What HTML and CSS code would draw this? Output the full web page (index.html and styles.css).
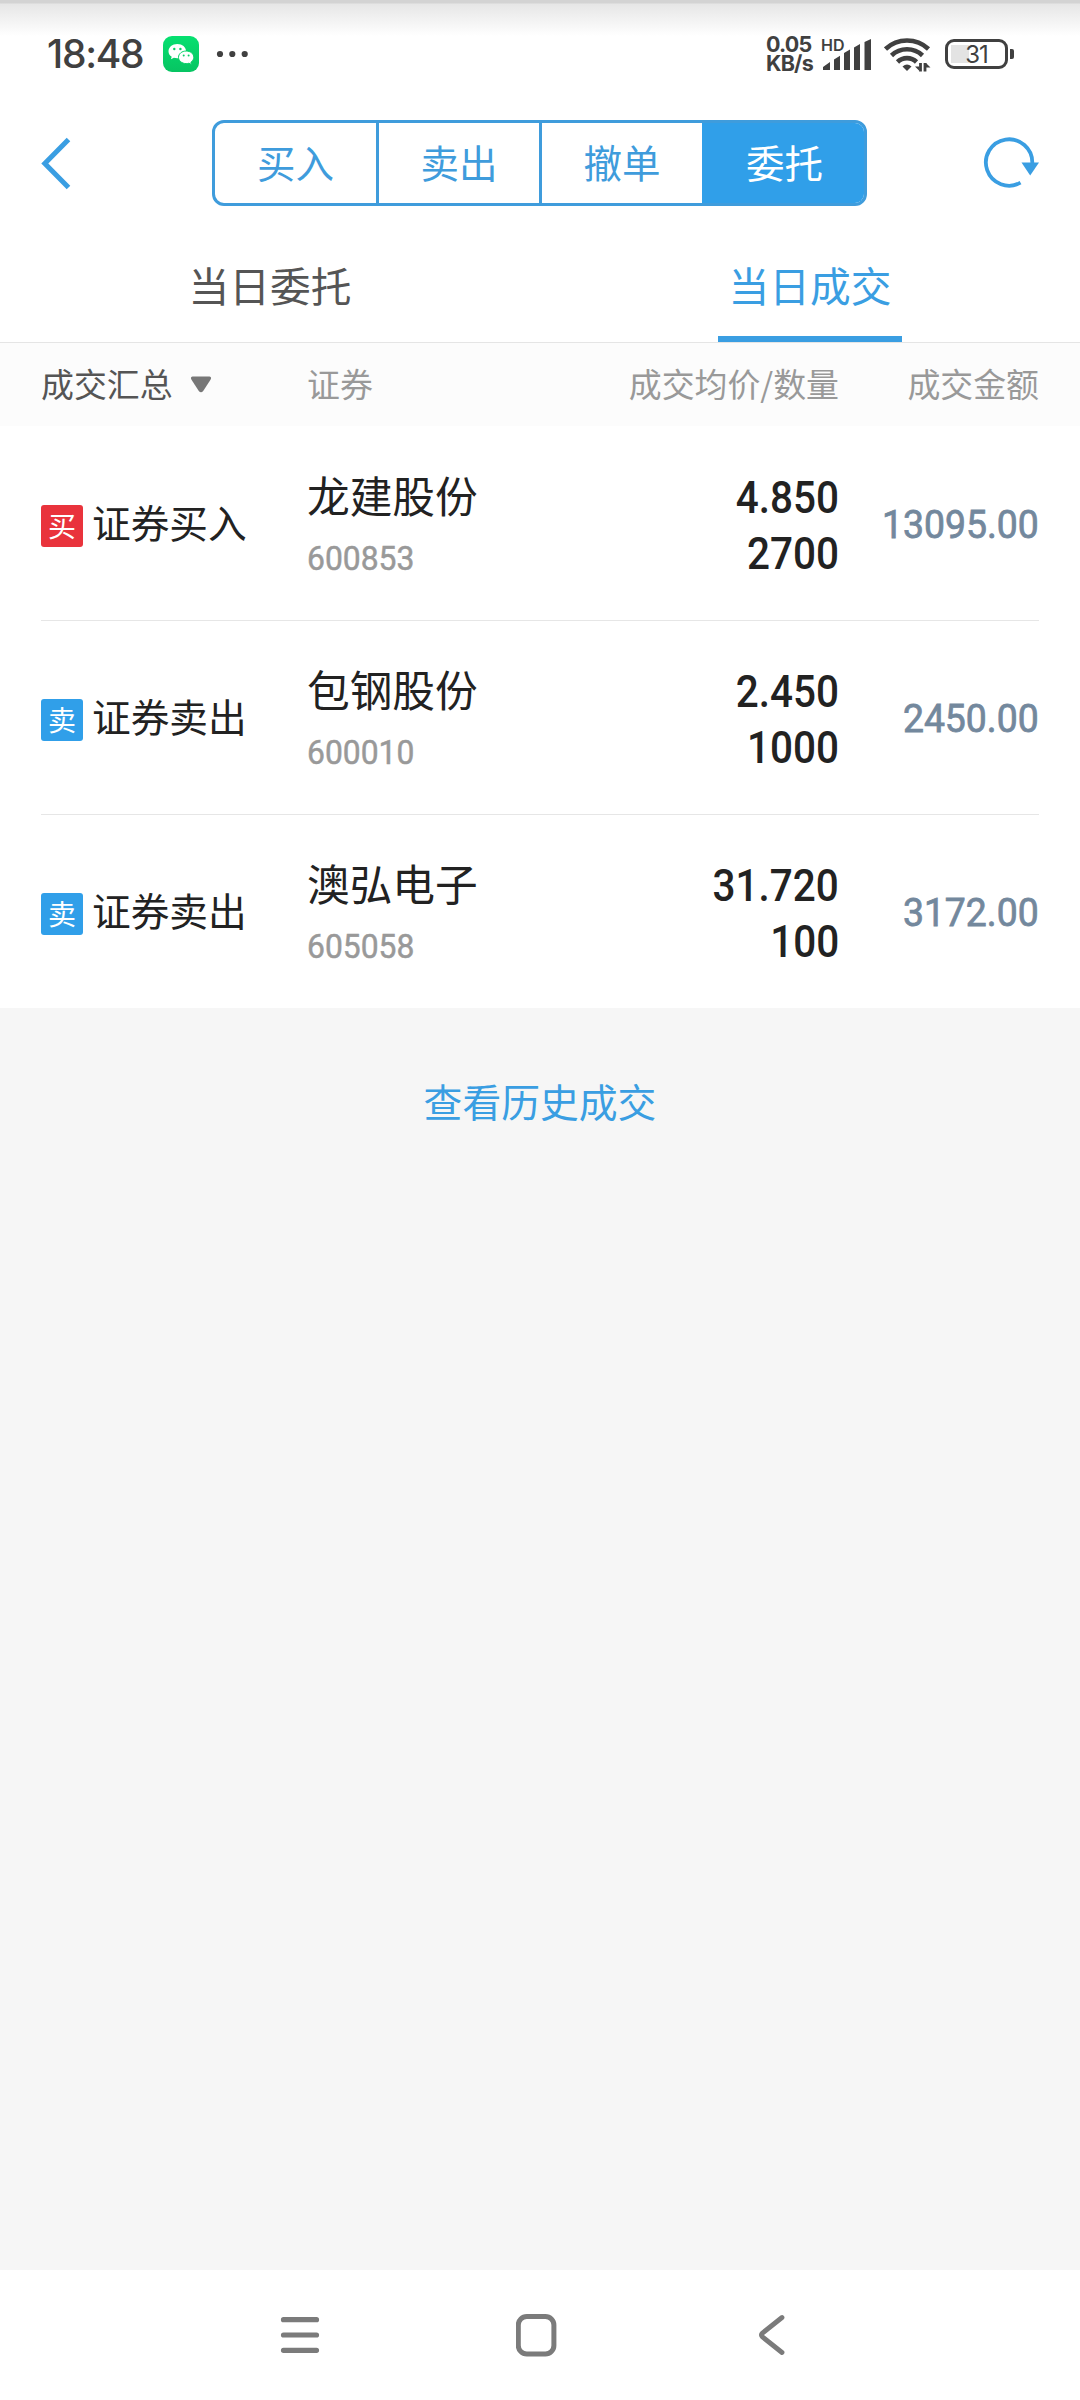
FILE: index.html
```html
<!DOCTYPE html>
<html lang="zh-CN">
<head>
<meta charset="utf-8">
<title>当日成交</title>
<link rel="stylesheet" href="styles.css">
</head>
<body>
<div class="screen">
  <div class="statusbar">
    <div class="status-left">
      <span class="clock">18:48</span>
      <svg class="wechat" width="36" height="36" viewBox="0 0 36 36">
        <defs><linearGradient id="wg" x1="0" y1="0" x2="0" y2="1"><stop offset="0" stop-color="#06e070"/><stop offset="1" stop-color="#07c462"/></linearGradient></defs>
        <rect width="36" height="36" rx="9" fill="url(#wg)"/>
        <path d="M14.300 8c-5 0-8.800 3.200-8.800 7.200 0 2.300 1.200 4.300 3.200 5.600l-.8 2.500 3-1.500c1 .3 2 .5 3.400.5 5 0 8.800-3.100 8.800-7.100S19.300 8 14.300 8z" fill="#fff"/>
        <path d="M23.200 15c-4.300 0-7.700 2.800-7.700 6.300s3.400 6.300 7.700 6.300c1 0 1.900-.1 2.800-.4l2.500 1.400-.6-2.300c1.800-1.200 2.900-3 2.900-5 0-3.500-3.400-6.300-7.600-6.300z" fill="#fff" stroke="#07d068" stroke-width="1"/>
        <g fill="#07d068"><circle cx="11.300" cy="13" r="1.200"/><circle cx="17.400" cy="13" r="1.200"/><circle cx="20.700" cy="19.400" r="1"/><circle cx="25.600" cy="19.400" r="1"/></g>
      </svg>
      <svg class="dots" width="32" height="8" viewBox="0 0 32 8" fill="#404040"><circle cx="4" cy="4" r="3.100"/><circle cx="16.300" cy="4" r="3.100"/><circle cx="28.700" cy="4" r="3.100"/></svg>
    </div>
    <div class="status-right">
      <div class="speed"><span class="speed-value">0.05</span><span class="speed-unit">KB/s</span></div>
      <div class="signal">
        <span class="hd">HD</span>
        <svg width="48" height="32" viewBox="0 0 48 32" fill="#404040">
          <path d="M0 31v-3l7-5v8zM11 31V20.500l6-3.800V31zM21 31V14l6-3.500V31zM31 31V8.500L37 5v26zM41.500 31V3L48 0v31z"/>
        </svg>
      </div>
      <svg class="wifi" width="48" height="36" viewBox="0 0 48 36">
        <g fill="none" stroke="#404040" stroke-width="4.600">
          <path d="M1.500 13a31.500 31.500 0 0 1 43 0"/>
          <path d="M7.500 19.500a22.500 22.500 0 0 1 31 0"/>
          <path d="M13.500 26a13.500 13.500 0 0 1 19 0"/>
        </g>
        <path d="M18.500 30.500q4.500-4 9 0L23 35z" fill="#404040"/>
        <path d="M36.500 27v8.500M41 35.500V27" stroke="#404040" stroke-width="2.800" fill="none"/>
        <path d="M31 30.500h4.500v4.500zM46.500 31.500H42V27z" fill="#404040"/>
      </svg>
      <div class="battery"><span>31</span></div>
    </div>
  </div>

  <div class="titlebar">
    <svg class="back" width="34" height="56" viewBox="0 0 34 56"><path d="M29.500 4.500 5.800 28.500 29.500 52.500" fill="none" stroke="#3a9ee2" stroke-width="5"/></svg>
    <div class="segments">
      <span class="segment">买入</span><span class="segment">卖出</span><span class="segment">撤单</span><span class="segment active">委托</span>
    </div>
    <svg class="refresh" width="58" height="56" viewBox="0 0 58 56"><path d="M49.300 29A23.200 23.200 0 1 0 37.500 48.700" fill="none" stroke="#3a9ee2" stroke-width="3.800"/><path d="M38.500 28.500h17.500l-8.800 13z" fill="#3a9ee2"/></svg>
  </div>

  <div class="tabs">
    <div class="tab"><span>当日委托</span></div>
    <div class="tab current"><span>当日成交</span></div>
  </div>

  <div class="table-head">
    <div class="filter">成交汇总<svg width="22" height="17" viewBox="0 0 22 17"><path d="M2.500.5h17q2.500.5 1 3.200l-7.300 11.300q-2.200 2.500-4.400 0L1.500 3.700Q0 1 2.500.5z" fill="#777"/></svg></div>
    <div>证券</div>
    <div class="right">成交均价/数量</div>
    <div class="right">成交金额</div>
  </div>

  <div class="rows">
    <div class="row">
      <div class="side"><span class="badge buy">买</span><span>证券买入</span></div>
      <div class="stock"><span class="name">龙建股份</span><span class="code">600853</span></div>
      <div class="deal"><span>4.850</span><span>2700</span></div>
      <div class="amount"><span>13095.00</span></div>
    </div>
    <div class="row">
      <div class="side"><span class="badge sell">卖</span><span>证券卖出</span></div>
      <div class="stock"><span class="name">包钢股份</span><span class="code">600010</span></div>
      <div class="deal"><span>2.450</span><span>1000</span></div>
      <div class="amount"><span>2450.00</span></div>
    </div>
    <div class="row">
      <div class="side"><span class="badge sell">卖</span><span>证券卖出</span></div>
      <div class="stock"><span class="name">澳弘电子</span><span class="code">605058</span></div>
      <div class="deal"><span>31.720</span><span>100</span></div>
      <div class="amount"><span>3172.00</span></div>
    </div>
  </div>

  <div class="history"><span>查看历史成交</span></div>

  <div class="navbar">
    <svg width="40" height="44" viewBox="0 0 40 44"><path d="M3.500 6.700h33M3.500 22h33M3.500 37.300h33" stroke="#7b7b7b" stroke-width="5.200" stroke-linecap="round"/></svg>
    <svg width="44" height="44" viewBox="0 0 44 44"><rect x="2.300" y="3.500" width="35.600" height="37.500" rx="8.500" fill="none" stroke="#7b7b7b" stroke-width="5"/></svg>
    <svg width="32" height="44" viewBox="0 0 32 44"><path d="M26 4.500 6.500 20q-2 2 0 4L26 39.500" fill="none" stroke="#7b7b7b" stroke-width="4.800" stroke-linecap="round"/></svg>
  </div>
</div>
</body>
</html>
```
FILE: styles.css
```css
* { box-sizing: border-box; }
body {
  margin: 0;
  background: #f6f6f6;
  font-family: "Noto Sans CJK SC", sans-serif;
  color: #222;
}
.screen {
  width: 1080px;
  height: 2400px;
  display: flex;
  flex-direction: column;
  overflow: hidden;
}
svg { display: block; flex: none; }

.statusbar {
  height: 108px;
  padding: 0 72px 0 47px;
  display: flex;
  justify-content: space-between;
  align-items: center;
  background: linear-gradient(#d3d3d3 0, #d3d3d3 3px, #e6e6e6 4px, #fff 36px);
  color: #404040;
  font-family: Inter, sans-serif;
}
.status-left, .status-right { display: flex; align-items: center; }
.clock { font-size: 39px; font-weight: 500; width: 116px; line-height: 40px; letter-spacing: -1.300px; }
.dots { margin-left: 17px; }
.speed {
  width: 57px;
  display: flex;
  flex-direction: column;
  font-size: 21.500px;
  font-weight: 700;
  line-height: 19px;
  letter-spacing: -.8px;
}
.signal { width: 61px; height: 36px; position: relative; display: flex; align-items: flex-end; padding-bottom: 1px; }
.hd { position: absolute; left: -2px; top: 1px; font-size: 16px; font-weight: 600; line-height: 16px; }
.battery {
  position: relative;
  margin-left: 13px;
  width: 63px;
  height: 30px;
  border: 3px solid #404040;
  border-radius: 9px;
  background: linear-gradient(90deg, #e3e3e3 18px, transparent 18px) 3px 3px / 50px 18px no-repeat;
  font-size: 24px;
  line-height: 25px;
  text-align: center;
  letter-spacing: -1px;
}
.battery::after {
  content: "";
  position: absolute;
  right: -9px;
  top: 7px;
  width: 4px;
  height: 10px;
  border-radius: 0 2px 2px 0;
  background: #404040;
}

.titlebar {
  height: 126px;
  padding: 12px 39px 0;
  display: flex;
  justify-content: space-between;
  align-items: flex-start;
  background: #fff;
}
.back { margin-top: 15px; }
.refresh { margin-top: 14px; }
.segments {
  width: 655px;
  height: 86px;
  margin-left: 23px;
  display: grid;
  grid-template-columns: 161px 163px 163px 162px;
  border: 3px solid #3f9cdc;
  border-radius: 12px;
  overflow: hidden;
}
.segment {
  font-size: 38.500px;
  line-height: 76px;
  text-align: center;
  color: #3f9cdc;
  border-left: 3px solid #3f9cdc;
}
.segment:first-child { border-left: 0; }
.segment.active { background: #309fe9; color: #fff; border-color: #309fe9; }

.tabs {
  height: 109px;
  display: grid;
  grid-template-columns: 1fr 1fr;
  background: #fff;
  border-bottom: 1px solid #e5e5e5;
}
.tab {
  display: flex;
  justify-content: center;
  font-size: 40.700px;
  line-height: 101px;
  color: #555;
}
.tab.current span {
  width: 184px;
  height: 108px;
  text-align: center;
  color: #3a9ee2;
  border-bottom: 6px solid #3a9ee2;
}

.table-head, .row {
  display: grid;
  grid-template-columns: 266px 201px 331px 200px;
}
.table-head {
  height: 83px;
  padding: 0 41px;
  background: #fcfcfc;
  font-size: 32.900px;
  line-height: 79px;
  color: #999;
}
.filter { display: flex; align-items: flex-start; gap: 17px; color: #555; }
.filter svg { margin-top: 33px; }
.right { text-align: right; }

.rows { background: #fff; padding: 0 41px; }
.row { height: 194px; align-items: center; }
.row + .row { box-shadow: inset 0 1px #e6e6e6; }
.side { display: flex; align-items: center; gap: 9px; font-size: 38.700px; line-height: 44px; padding-bottom: 4px; white-space: nowrap; }
.badge {
  width: 42px;
  height: 42px;
  margin-top: 10px;
  border-radius: 3px;
  font-size: 28px;
  line-height: 40px;
  text-align: center;
  color: #fff;
}
.buy { background: #e9333c; }
.sell { background: #309fe9; }
.stock, .deal { display: flex; flex-direction: column; }
.stock { padding-top: 9px; }
.name { font-size: 42.700px; line-height: 60px; }
.code {
  padding-top: 3px;
  font-family: Roboto, sans-serif;
  font-size: 33px;
  line-height: 64px;
  color: #999;
  transform: scaleX(.965);
  transform-origin: left;
  -webkit-text-stroke: .5px #999;
}
.deal { padding-top: 8px; align-items: flex-end; font-family: Roboto, sans-serif; font-weight: 500; font-size: 43.500px; line-height: 56.500px; }
.deal span { transform: scaleX(.93); transform-origin: right; }
.amount { padding-top: 2px; text-align: right; font-family: Roboto, sans-serif; font-size: 39.500px; color: #73889d; }
.amount span { display: inline-block; transform: scaleX(.945); transform-origin: right; -webkit-text-stroke: .8px #73889d; }

.history {
  flex: 1;
  padding-top: 64px;
  text-align: center;
  font-size: 38.800px;
  line-height: 56px;
  color: #3a9ee2;
}

.navbar {
  height: 130px;
  padding: 0 292px 0 280px;
  display: flex;
  justify-content: space-between;
  align-items: center;
  background: #fff;
}
```
